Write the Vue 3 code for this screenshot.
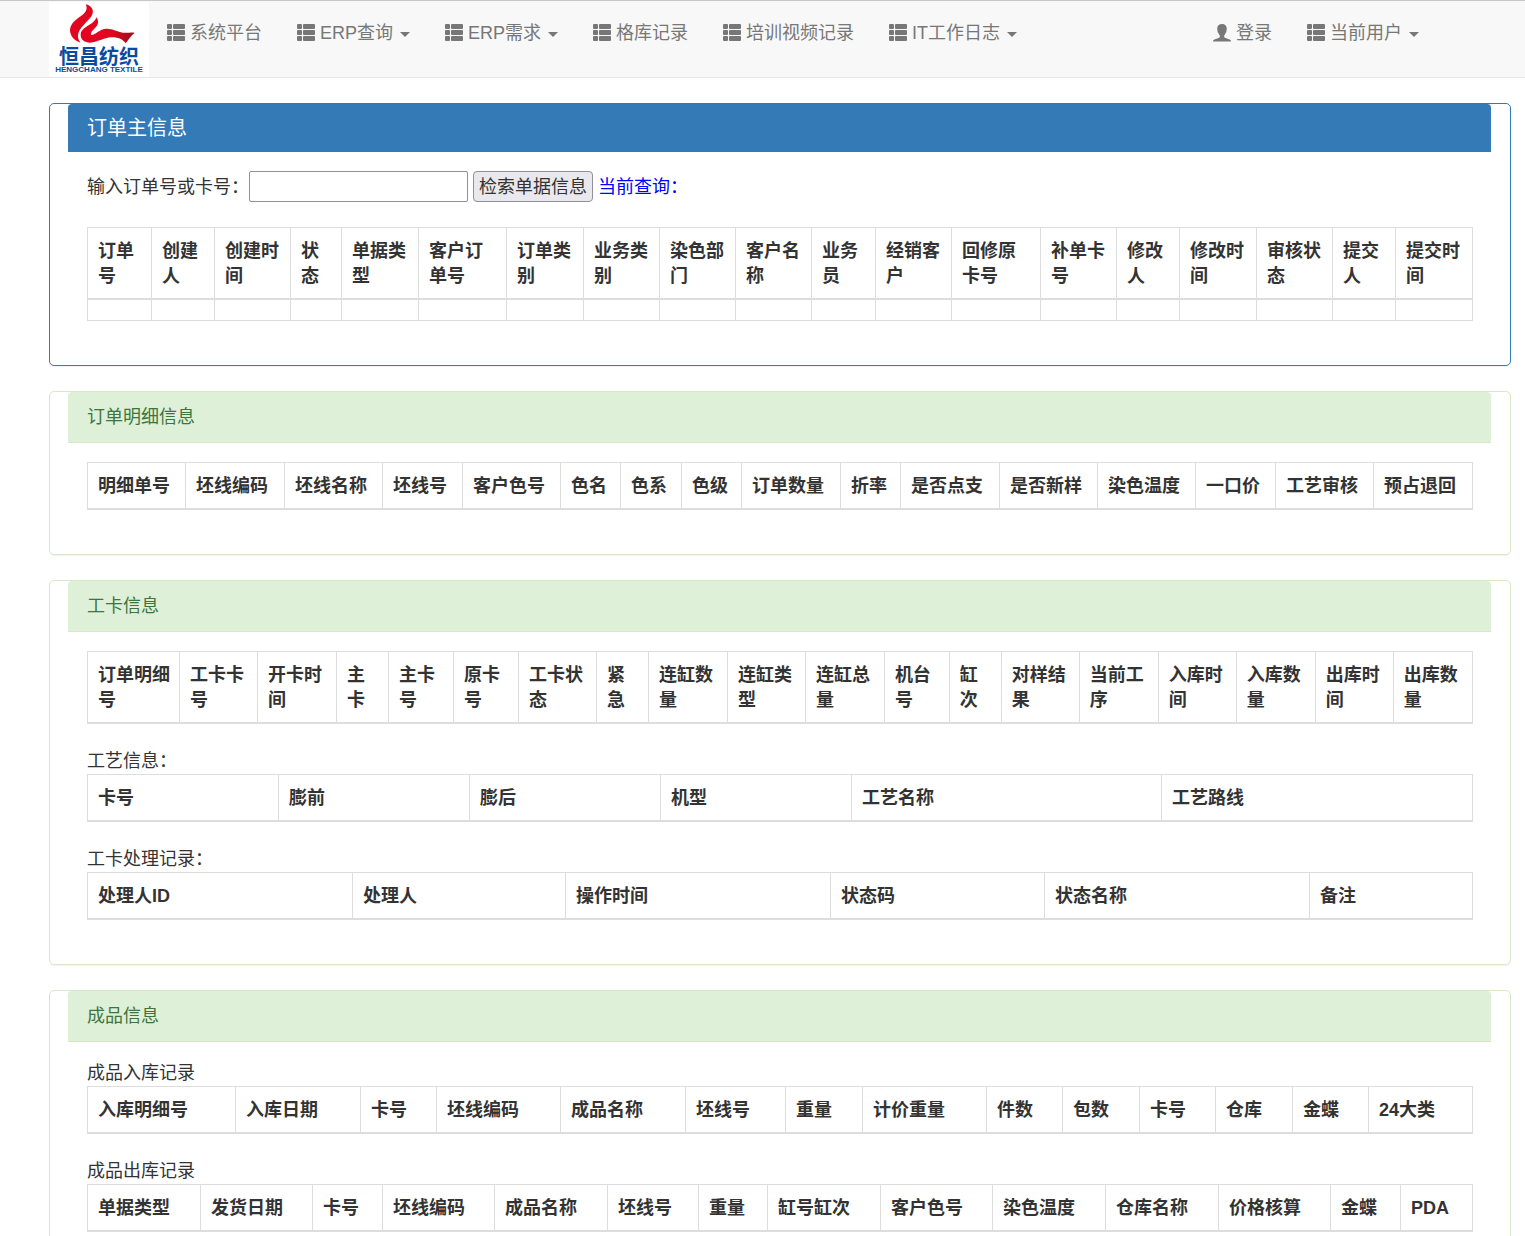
<script setup>
import { ref } from 'vue'

const keyword = ref('')

const mainMenu = [
  { text: '系统平台' },
  { text: 'ERP查询', caret: true },
  { text: 'ERP需求', caret: true },
  { text: '格库记录' },
  { text: '培训视频记录' },
  { text: 'IT工作日志', caret: true },
]

const userMenu = [
  { text: '登录', icon: 'user' },
  { text: '当前用户', caret: true },
]

// Every column is [title, relative width].
const orderTable = {
  emptyRow: true,
  columns: [
    ['订单号', 64], ['创建人', 63], ['创建时间', 76], ['状态', 51], ['单据类型', 77],
    ['客户订单号', 88], ['订单类别', 77], ['业务类别', 76], ['染色部门', 76], ['客户名称', 76],
    ['业务员', 64], ['经销客户', 76], ['回修原卡号', 89], ['补单卡号', 76], ['修改人', 63],
    ['修改时间', 77], ['审核状态', 76], ['提交人', 63], ['提交时间', 77],
  ],
}

const panels = [
  {
    title: '订单主信息',
    primary: true,
    search: true,
    tables: [orderTable],
  },
  {
    title: '订单明细信息',
    tables: [
      {
        columns: [
          ['明细单号', 98], ['坯线编码', 99], ['坯线名称', 98], ['坯线号', 80], ['客户色号', 98],
          ['色名', 60], ['色系', 61], ['色级', 60], ['订单数量', 99], ['折率', 60],
          ['是否点支', 99], ['是否新样', 98], ['染色温度', 98], ['一口价', 80], ['工艺审核', 98],
          ['预占退回', 99],
        ],
      },
    ],
  },
  {
    title: '工卡信息',
    tables: [
      {
        columns: [
          ['订单明细号', 92], ['工卡卡号', 78], ['开卡时间', 79], ['主卡', 52], ['主卡号', 65],
          ['原卡号', 65], ['工卡状态', 78], ['紧急', 52], ['连缸数量', 79], ['连缸类型', 78],
          ['连缸总量', 79], ['机台号', 65], ['缸次', 52], ['对样结果', 78], ['当前工序', 79],
          ['入库时间', 78], ['入库数量', 79], ['出库时间', 78], ['出库数量', 79],
        ],
      },
      {
        label: '工艺信息：',
        columns: [
          ['卡号', 191], ['膨前', 191], ['膨后', 191], ['机型', 191], ['工艺名称', 310],
          ['工艺路线', 311],
        ],
      },
      {
        label: '工卡处理记录：',
        columns: [
          ['处理人ID', 265], ['处理人', 213], ['操作时间', 265], ['状态码', 214],
          ['状态名称', 265], ['备注', 163],
        ],
      },
    ],
  },
  {
    title: '成品信息',
    tables: [
      {
        label: '成品入库记录',
        columns: [
          ['入库明细号', 148], ['入库日期', 125], ['卡号', 76], ['坯线编码', 124], ['成品名称', 125],
          ['坯线号', 100], ['重量', 77], ['计价重量', 124], ['件数', 76], ['包数', 77],
          ['卡号', 76], ['仓库', 77], ['金蝶', 76], ['24大类', 104],
        ],
      },
      {
        label: '成品出库记录',
        columns: [
          ['单据类型', 113], ['发货日期', 112], ['卡号', 70], ['坯线编码', 112], ['成品名称', 113],
          ['坯线号', 91], ['重量', 69], ['缸号缸次', 113], ['客户色号', 112], ['染色温度', 113],
          ['仓库名称', 113], ['价格核算', 112], ['金蝶', 70], ['PDA', 72],
        ],
      },
    ],
  },
]

function columnWidth(table, column) {
  const total = table.columns.reduce((sum, c) => sum + c[1], 0)
  return (column[1] / total) * 100 + '%'
}
</script>

<template>
  <header class="navbar">
    <a class="brand" href="#" aria-label="恒昌纺织">
      <svg class="brand-mark" viewBox="27 5 300 126" aria-hidden="true">
        <defs>
          <linearGradient id="flame" x1="0" x2="1">
            <stop offset="0" stop-color="#e60020" />
            <stop offset="0.55" stop-color="#e2071f" />
            <stop offset="1" stop-color="#990f1c" />
          </linearGradient>
        </defs>
        <path fill="#e3061f" d="M137 12 C154 15 165 31 155 46 C144 64 116 82 114 104 C113 114 117 120 121 127 C104 122 90 107 90 90 C91 70 107 58 122 48 C136 38 145 27 137 12Z" />
        <path fill="url(#flame)" d="M169 51 C178 63 175 73 165 83 C157 91 151 97 153 103 C160 108 174 90 193 86 C214 82 229 94 249 97 C263 99 275 95 284 98 C273 105 266 118 257 129 C248 116 232 110 214 111 C192 112 172 126 150 127 C134 127 122 118 122 104 C122 78 163 75 169 51Z" />
      </svg>
      <span class="brand-name">恒昌纺织</span>
      <span class="brand-latin">HENGCHANG TEXTILE</span>
    </a>
    <nav v-for="(menu, m) in [mainMenu, userMenu]" :key="m" :aria-label="m ? '用户' : '主菜单'">
      <ul class="menu">
        <li v-for="item in menu" :key="item.text">
          <a class="menu-link" href="#">
            <svg v-if="item.icon === 'user'" class="icon" viewBox="0 0 18 19" aria-hidden="true">
              <path d="M9 0c3 0 4.800 1.800 4.800 4.600 0 1-.2 1.700-.5 2.300.4.600 0 1.600-.6 1.900-.3 1.100-.8 2-1.500 2.700v1.300c0 .5.2.7.7.9l4.600 1.900c1 .4 1.500 1 1.500 1.900H0c0-.9.5-1.500 1.500-1.900l4.600-1.900c.5-.2.7-.4.7-.9v-1.300c-.7-.7-1.200-1.600-1.500-2.700-.6-.3-1-1.300-.6-1.900-.3-.6-.5-1.300-.5-2.300C4.200 1.800 6 0 9 0z" />
            </svg>
            <svg v-else class="icon" viewBox="0 0 18 19" aria-hidden="true">
              <rect x="0" y="0" width="5" height="5" rx="1" />
              <rect x="6" y="0" width="12" height="5" rx="1" />
              <rect x="0" y="6" width="5" height="5" rx="1" />
              <rect x="6" y="6" width="12" height="5" rx="1" />
              <rect x="0" y="12" width="5" height="5" rx="1" />
              <rect x="6" y="12" width="12" height="5" rx="1" />
            </svg>
            <span>{{ item.text }}</span>
            <span v-if="item.caret" class="caret"></span>
          </a>
        </li>
      </ul>
    </nav>
  </header>

  <main class="page">
    <section
      v-for="panel in panels"
      :key="panel.title"
      class="panel"
      :class="{ primary: panel.primary }"
    >
      <h2 class="panel-heading">{{ panel.title }}</h2>
      <div class="panel-body">
        <form v-if="panel.search" class="search" @submit.prevent>
          <label for="keyword">输入订单号或卡号：</label>
          <input id="keyword" v-model="keyword" type="text" />
          <button type="submit">检索单据信息</button>
          <span class="current">当前查询：</span>
        </form>
        <table v-for="(table, t) in panel.tables" :key="t">
          <caption v-if="table.label">{{ table.label }}</caption>
          <colgroup>
            <col v-for="(c, i) in table.columns" :key="i" :style="{ width: columnWidth(table, c) }" />
          </colgroup>
          <thead>
            <tr>
              <th v-for="(c, i) in table.columns" :key="i" scope="col">{{ c[0] }}</th>
            </tr>
          </thead>
          <tbody v-if="table.emptyRow">
            <tr>
              <td v-for="(c, i) in table.columns" :key="i"></td>
            </tr>
          </tbody>
        </table>
      </div>
    </section>
  </main>
</template>

<style>
body {
  margin: 0;
  background: #fff;
}
</style>

<style scoped>
.navbar,
.page {
  font-family: "Liberation Sans", "Noto Sans CJK SC", sans-serif;
  font-size: 18px;
  font-weight: 400;
  line-height: 25px;
  color: #333;
}

.navbar {
  display: flex;
  justify-content: space-between;
  padding: 1px 89px 0 49px;
  border-top: 1px solid #c8c8c8;
  border-bottom: 1px solid #e7e7e7;
  background: #f8f8f8;
}

.brand {
  display: flex;
  flex-direction: column;
  align-items: center;
  width: 100px;
  height: 75px;
  background: #fff;
  color: #0b4a9e;
  text-decoration: none;
  white-space: nowrap;
}

.brand-mark {
  width: 100px;
  height: 42px;
  margin-bottom: 4px;
}

.brand-name {
  font-size: 20px;
  font-weight: 700;
  line-height: 18px;
}

.brand-latin {
  font-size: 8px;
  font-weight: 700;
  line-height: 8px;
}

.navbar nav:last-child {
  margin-left: auto;
}

.menu {
  display: flex;
  margin: 0;
  padding: 0;
  list-style: none;
}

.menu-link {
  display: flex;
  align-items: center;
  padding: 19px 17px 17px 18px;
  color: #777;
  text-decoration: none;
  white-space: nowrap;
}

.icon {
  width: 18px;
  height: 19px;
  margin-right: 5px;
  fill: #777;
}

.caret {
  margin: 2px 0 0 7px;
  border-top: 5px solid #777;
  border-right: 5px solid transparent;
  border-left: 5px solid transparent;
}

.page {
  padding: 25px 14px 0 49px;
}

.panel {
  margin-bottom: 25px;
  padding: 0 19px 0 18px;
  border: 1px solid #d6e9c6;
  border-radius: 5px;
  box-shadow: 0 1px 1px rgba(0, 0, 0, 0.05);
}

.panel-heading {
  margin: 0;
  padding: 13px 19px 12px;
  border-bottom: 1px solid #d6e9c6;
  border-radius: 4px 4px 0 0;
  background: #dff0d8;
  color: #3c763d;
  font-size: 18px;
  font-weight: 400;
}

.panel-body {
  padding: 19px 18px 19px 19px;
}

.panel.primary {
  border-color: #337ab7;
}

.primary .panel-heading {
  padding: 12px 19px 10px;
  border-color: #337ab7;
  background: #337ab7;
  color: #fff;
  font-size: 20px;
}

.search {
  display: flex;
  align-items: center;
  margin-bottom: 25px;
}

.search input,
.search button {
  box-sizing: border-box;
  height: 31px;
  border: 1px solid #8f8f9d;
  color: #333;
  font: inherit;
}

.search input {
  width: 219px;
  padding: 1px 4px;
  border-radius: 2px;
  background: #fff;
}

.search button {
  margin: 0 5px;
  padding: 1px 5px 0;
  border-radius: 4px;
  background: #e9e9ed;
}

.search label,
.current {
  padding-top: 2px;
}

.current {
  color: #00f;
}

table {
  width: 100%;
  margin-bottom: 25px;
  border-collapse: collapse;
  table-layout: fixed;
}

caption {
  text-align: left;
}

th,
td {
  border: 1px solid #ddd;
}

th {
  padding: 11px 8px 9px 10px;
  border-bottom-width: 2px;
  font-weight: 700;
  text-align: left;
  vertical-align: bottom;
}

td {
  height: 20px;
  padding: 0;
}
</style>
